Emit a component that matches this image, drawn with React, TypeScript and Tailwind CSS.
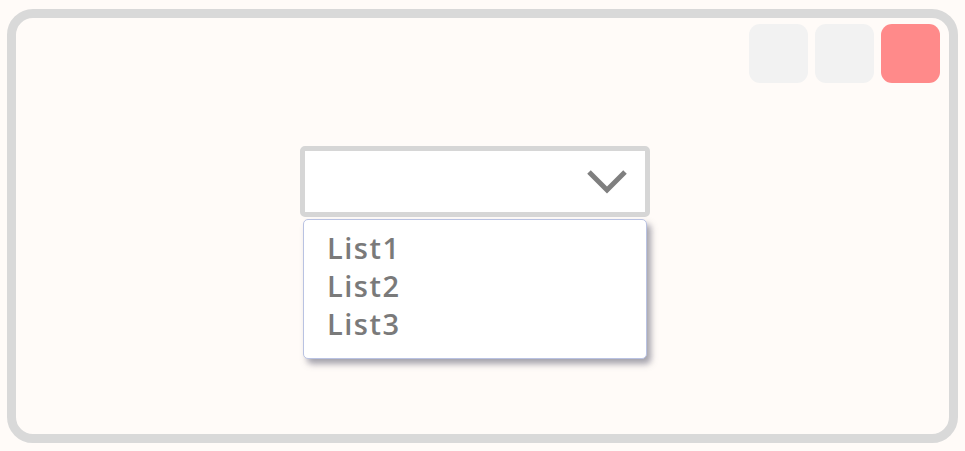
const items = ["List1", "List2", "List3"];

export default function App() {
  return (
    <div className="h-[451px] w-[965px] bg-[#fffbf8] pl-[7px] pt-[9px]">
      <div className="flex h-[434px] w-[951px] flex-col rounded-[26px] border-[9px] border-[#d9d9d9] bg-[#fffbf8]">
        <div className="flex justify-end gap-[7px] pr-[9px] pt-[6px]">
          <button className="h-[59px] w-[59px] rounded-[11px] bg-[#f2f2f2]" />
          <button className="h-[59px] w-[59px] rounded-[11px] bg-[#f2f2f2]" />
          <button className="h-[59px] w-[59px] rounded-[11px] bg-[#ff8a8a]" />
        </div>
        <div className="ml-[284px] mt-[63px] flex w-[350px] flex-col">
          <div className="flex h-[71px] items-center justify-end rounded-[5px] border-[5px] border-[#d6d6d6] bg-white pr-[17px]">
            <svg width="42" height="28" viewBox="0 0 42 28" className="mt-[1px]">
              <polyline points="3,4 21,22 39,4" fill="none" stroke="#7f7f7f" strokeWidth="5" />
            </svg>
          </div>
          <ul className="ml-[3px] mt-[2px] flex h-[140px] w-[344px] flex-col rounded-[5px] border border-[#b9c2e2] bg-white pl-[23px] pt-[9px] shadow-[4px_5px_6px_rgba(90,90,110,0.55)]">
            {items.map((e) => (
              <li key={e} className="font-['Open_Sans',sans-serif] text-[29px] font-semibold leading-[38px] tracking-[1.5px] text-[#7a7a7a]">
                {e}
              </li>
            ))}
          </ul>
        </div>
      </div>
    </div>
  );
}
